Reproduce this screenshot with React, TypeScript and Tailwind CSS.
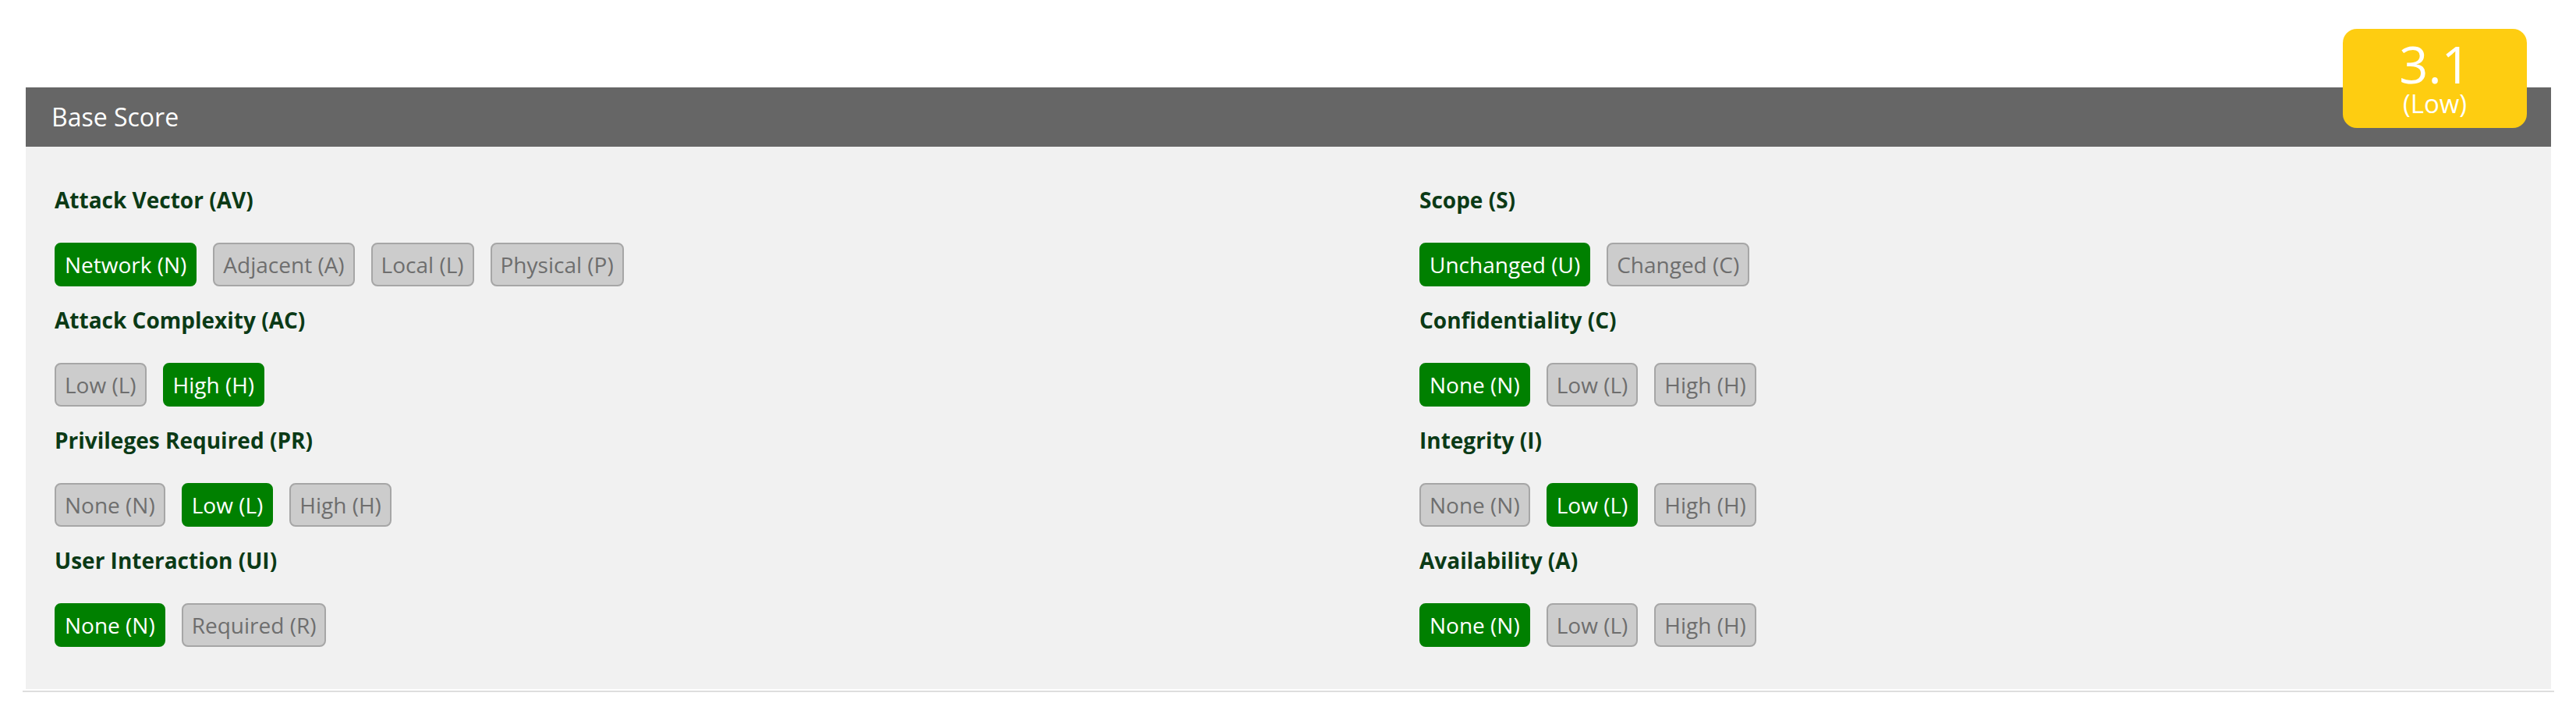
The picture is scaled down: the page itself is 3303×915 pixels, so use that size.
import React from 'react';

type Metric = {
  title: string;
  options: string[];
  selected: number;
};

const leftMetrics: Metric[] = [
  { title: 'Attack Vector (AV)', options: ['Network (N)', 'Adjacent (A)', 'Local (L)', 'Physical (P)'], selected: 0 },
  { title: 'Attack Complexity (AC)', options: ['Low (L)', 'High (H)'], selected: 1 },
  { title: 'Privileges Required (PR)', options: ['None (N)', 'Low (L)', 'High (H)'], selected: 1 },
  { title: 'User Interaction (UI)', options: ['None (N)', 'Required (R)'], selected: 0 },
];

const rightMetrics: Metric[] = [
  { title: 'Scope (S)', options: ['Unchanged (U)', 'Changed (C)'], selected: 0 },
  { title: 'Confidentiality (C)', options: ['None (N)', 'Low (L)', 'High (H)'], selected: 0 },
  { title: 'Integrity (I)', options: ['None (N)', 'Low (L)', 'High (H)'], selected: 1 },
  { title: 'Availability (A)', options: ['None (N)', 'Low (L)', 'High (H)'], selected: 0 },
];

function OptionButton({ label, active }: { label: string; active: boolean }) {
  return (
    <button
      type="button"
      className={
        active
          ? 'inline-flex h-[56px] items-center rounded-[8px] border-2 border-[#008000] bg-[#008000] px-[11px] text-[28px] leading-[40px] text-white'
          : 'inline-flex h-[56px] items-center rounded-[8px] border-2 border-[#a6a6a6] bg-[#cccccc] px-[11px] text-[28px] leading-[40px] text-[#6e6e6e]'
      }
    >
      {label}
    </button>
  );
}

function MetricGroup({ metric }: { metric: Metric }) {
  return (
    <div className="flex flex-col">
      <h3 className="text-[28px] leading-[40px] font-bold text-[#0b3a16]">{metric.title}</h3>
      <div className="mt-[35px] flex gap-[21px]">
        {metric.options.map((opt, i) => (
          <OptionButton key={opt} label={opt} active={i === metric.selected} />
        ))}
      </div>
    </div>
  );
}

export default function App() {
  return (
    <div className="min-h-[915px] w-full bg-white pl-[29px] pr-[28px] pt-[112px]" style={{ fontFamily: '"Open Sans", "Liberation Sans", sans-serif' }}>
      <div className="relative mx-[4px]">
        <div className="flex h-[76px] items-center bg-[#666666] px-[33px]">
          <span className="text-[32px] text-white">Base Score</span>
        </div>
        <div className="absolute right-[31px] top-[-75px] flex h-[127px] w-[236px] flex-col items-center rounded-[18px] bg-[#fecd11] pt-[16px] text-white">
          <span className="text-[65px] leading-[58px]">3.1</span>
          <span className="mt-[3px] text-[33px] leading-[38px]">(Low)</span>
        </div>
        <div className="grid grid-cols-[1750px_1fr] bg-[#f1f1f1] px-[37px] pb-[54px] pt-[48px]">
          <div className="flex flex-col gap-[23px]">
            {leftMetrics.map((m) => (
              <MetricGroup key={m.title} metric={m} />
            ))}
          </div>
          <div className="flex flex-col gap-[23px]">
            {rightMetrics.map((m) => (
              <MetricGroup key={m.title} metric={m} />
            ))}
          </div>
        </div>
      </div>
      <div className="mt-[2px] border-t-2 border-[#dedede]" />
    </div>
  );
}
